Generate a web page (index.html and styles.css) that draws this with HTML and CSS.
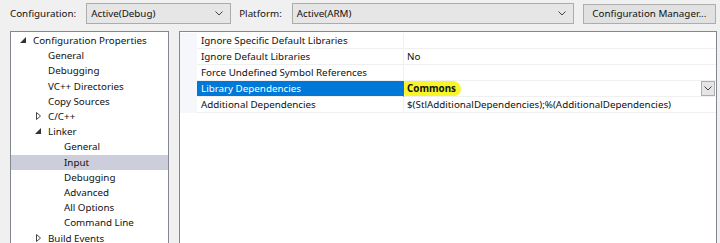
FILE: index.html
```html
<!DOCTYPE html>
<html lang="en">
<head>
    <meta charset="UTF-8">
    <title>Property Pages</title>
    <link rel="stylesheet" href="styles.css">
</head>
<body>

    <div class="toolbar">
        <span class="label">Configuration:</span>
        <div class="combo combo-config">
            <span>Active(Debug)</span>
            <svg class="chev" width="8" height="5" viewBox="0 0 8 5"><polyline points="0.5,0.5 4,4 7.5,0.5" fill="none" stroke="#444" stroke-width="1"/></svg>
        </div>
        <span class="label">Platform:</span>
        <div class="combo combo-platform">
            <span>Active(ARM)</span>
            <svg class="chev" width="8" height="5" viewBox="0 0 8 5"><polyline points="0.5,0.5 4,4 7.5,0.5" fill="none" stroke="#444" stroke-width="1"/></svg>
        </div>
        <div class="btn">Configuration Manager...</div>
    </div>

    <div class="main">
        <div class="tree">
            <div class="node lvl0"><svg class="arrow" width="6" height="6" viewBox="0 0 6 6"><polygon points="6,0 6,6 0,6" fill="#333"/></svg>Configuration Properties</div>
            <div class="node lvl1">General</div>
            <div class="node lvl1">Debugging</div>
            <div class="node lvl1">VC++ Directories</div>
            <div class="node lvl1">Copy Sources</div>
            <div class="node lvl1"><svg class="arrow closed" width="5" height="8" viewBox="0 0 5 8"><polygon points="0.5,0.5 4.5,4 0.5,7.5" fill="none" stroke="#444" stroke-width="1"/></svg>C/C++</div>
            <div class="node lvl1"><svg class="arrow" width="6" height="6" viewBox="0 0 6 6"><polygon points="6,0 6,6 0,6" fill="#333"/></svg>Linker</div>
            <div class="node lvl2">General</div>
            <div class="node lvl2 current">Input</div>
            <div class="node lvl2">Debugging</div>
            <div class="node lvl2">Advanced</div>
            <div class="node lvl2">All Options</div>
            <div class="node lvl2">Command Line</div>
            <div class="node lvl1"><svg class="arrow closed" width="5" height="8" viewBox="0 0 5 8"><polygon points="0.5,0.5 4.5,4 0.5,7.5" fill="none" stroke="#444" stroke-width="1"/></svg>Build Events</div>
        </div>

        <div class="grid">
            <div class="row">
                <div class="gutter"></div>
                <div class="name">Ignore Specific Default Libraries</div>
                <div class="value"></div>
            </div>
            <div class="row">
                <div class="gutter"></div>
                <div class="name">Ignore Default Libraries</div>
                <div class="value">No</div>
            </div>
            <div class="row">
                <div class="gutter"></div>
                <div class="name">Force Undefined Symbol References</div>
                <div class="value"></div>
            </div>
            <div class="row selected">
                <div class="gutter"></div>
                <div class="name">Library Dependencies</div>
                <div class="value">
                    <b class="marker">Commons</b>
                    <span class="drop"><svg width="8" height="5" viewBox="0 0 8 5"><polyline points="0.5,0.5 4,4 7.5,0.5" fill="none" stroke="#444" stroke-width="1"/></svg></span>
                </div>
            </div>
            <div class="row">
                <div class="gutter"></div>
                <div class="name">Additional Dependencies</div>
                <div class="value">$(StlAdditionalDependencies);%(AdditionalDependencies)</div>
            </div>
        </div>
    </div>

</body>
</html>
```

FILE: styles.css
```css
body {
    margin: 0; overflow: hidden;
    background: #f0f0f0;
    font-family: 'Noto Sans', sans-serif; font-size: 9.8px; color: #111;
    width: 720px; height: 243px;
}

/* Top bar */
.toolbar {
    display: flex; align-items: center;
    padding: 3px 0 0 10px; height: 21px;
}
.label { margin-right: 10px; }
.combo {
    display: flex; align-items: center; justify-content: space-between;
    height: 21px; box-sizing: border-box; padding: 0 7px 0 4px;
    background: #e6e6e6; border: 1px solid #acacac;
}
.combo-config { width: 145px; margin-right: 8px; }
.combo-platform { width: 282px; margin-right: 9px; }
.btn {
    width: 133px; height: 20px; box-sizing: border-box;
    display: flex; align-items: center; justify-content: center;
    background: #e1e1e1; border: 1px solid #adadad;
}

/* Left navigation tree */
.main { display: flex; padding: 7px 0 0 10px; gap: 10px; }
.tree {
    width: 159px; height: 212px; box-sizing: border-box;
    background: #fff; border: 1px solid #828790; border-bottom: 0;
    padding-top: 1px; flex-shrink: 0; overflow: hidden;
}
.node {
    height: 15.2px; line-height: 15px; white-space: nowrap;
    display: flex; align-items: center;
}
.lvl0 { padding-left: 8px; }
.lvl1 { padding-left: 37px; }
.lvl2 { padding-left: 53px; }
.arrow { flex-shrink: 0; }
.lvl0 .arrow { margin-left: 1px; margin-right: 7px; margin-top: -1px; }
.lvl1 .arrow { margin-left: -13px; margin-right: 7px; margin-top: -1px; }
.lvl1 .arrow.closed { margin-left: -12px; margin-right: 7px; }
.current { background: #cccedb; }

/* Property grid */
.grid {
    width: 538px; height: 212px; box-sizing: border-box;
    background: #fff; border: 1px solid #828790; border-bottom: 0;
    padding-top: 1px; flex-shrink: 0;
}
.row { display: flex; height: 16px; line-height: 15px; }
.gutter { width: 17px; background: #f5f7fb; }
.name {
    width: 207px; padding-left: 4px; box-sizing: border-box; white-space: nowrap;
    border-bottom: 1px solid #f0f0f0; border-right: 1px solid #f0f0f0;
}
.value {
    flex: 1; padding-left: 3px; position: relative; white-space: nowrap;
    border-bottom: 1px solid #f0f0f0;
}
.selected .name { background: #0078d7; color: #fff; border-right-color: #0078d7; }
.marker {
    background: #f6f628; padding: 1px 5px 1px 3px; margin-left: -3px;
    border-radius: 2px 9px 7px 3px; color: #111;
}
.drop {
    position: absolute; right: 1px; top: 0;
    width: 14px; height: 15px; box-sizing: border-box;
    border: 1px solid #adadad; background: #e5e5e5;
    display: flex; align-items: center; justify-content: center;
}
```
